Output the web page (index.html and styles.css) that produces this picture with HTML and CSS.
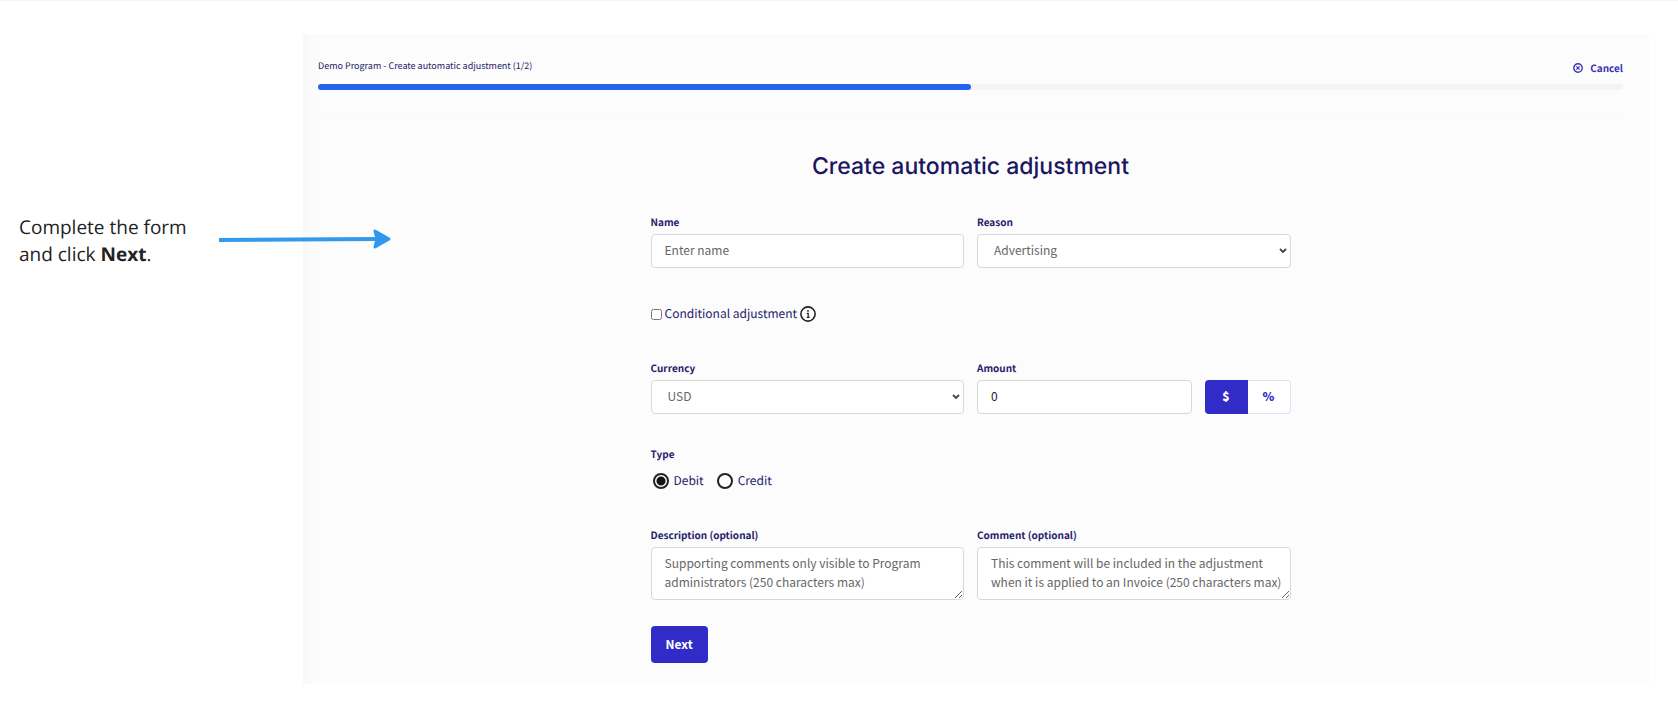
FILE: index.html
```html
<!DOCTYPE html>
<html lang="en">
<head>
  <meta charset="UTF-8">
  <meta name="viewport" content="width=device-width, initial-scale=1.0">
  <title>Create automatic adjustment</title>
  <link rel="stylesheet" href="styles.css">
</head>
<body>
  <div class="page">
    <aside class="guide">
      <p class="guide-text">Complete the form and click <strong>Next</strong>.</p>
      <svg class="guide-arrow" width="174" height="22" viewBox="0 0 174 22" aria-hidden="true">
        <path d="M0 12 L158 11" stroke="#3399ea" stroke-width="4" fill="none"/>
        <path d="M156 3 L170 11 L156 19 L158 11 Z" fill="#2f98ee" stroke="#2f98ee" stroke-width="3" stroke-linejoin="round"/>
      </svg>
    </aside>

    <main class="panel">
      <header class="panel-header">
        <div class="header-row">
          <span class="breadcrumb">Demo Program - Create automatic adjustment (1/2)</span>
          <a class="cancel" href="#">
            <svg width="10" height="10" viewBox="0 0 10 10" fill="none" stroke="currentColor" aria-hidden="true">
              <circle cx="5" cy="5" r="4.2" stroke-width="1.4"/>
              <path d="M3.3 3.3 L6.7 6.7 M6.7 3.3 L3.3 6.7" stroke-width="1.1"/>
            </svg>
            Cancel
          </a>
        </div>
        <div class="progress"><div class="progress-bar" style="width: 50%"></div></div>
      </header>

      <form class="form">
        <h1>Create automatic adjustment</h1>

        <div class="row">
          <div class="field">
            <label for="name">Name</label>
            <input class="control" type="text" id="name" placeholder="Enter name">
          </div>
          <div class="field">
            <label for="reason">Reason</label>
            <select class="control" id="reason">
              <option>Advertising</option>
            </select>
          </div>
        </div>

        <div class="check-row">
          <input class="checkbox" type="checkbox" id="conditional">
          <label for="conditional">Conditional adjustment</label>
          <svg class="info" width="16" height="16" viewBox="0 0 16 16" aria-hidden="true">
            <circle cx="8" cy="8" r="7.1" fill="none" stroke="#222" stroke-width="1.6"/>
            <circle cx="8" cy="4.9" r="0.9" fill="#222"/>
            <path d="M6.8 7.3 H8.2 V11.3 M6.7 11.3 H9.6" fill="none" stroke="#222" stroke-width="1.2"/>
          </svg>
        </div>

        <div class="row">
          <div class="field">
            <label for="currency">Currency</label>
            <select class="control" id="currency">
              <option>USD</option>
            </select>
          </div>
          <div class="amount">
            <div class="field">
              <label for="amount">Amount</label>
              <input class="control" type="text" id="amount" value="0">
            </div>
            <div class="toggle">
              <button type="button" class="toggle-button active">$</button>
              <button type="button" class="toggle-button">%</button>
            </div>
          </div>
        </div>

        <fieldset class="type">
          <legend>Type</legend>
          <div class="radios">
            <label><input type="radio" name="type" checked>Debit</label>
            <label><input type="radio" name="type">Credit</label>
          </div>
        </fieldset>

        <div class="row">
          <div class="field">
            <label for="description">Description (optional)</label>
            <textarea class="control" id="description" placeholder="Supporting comments only visible to Program administrators (250 characters max)"></textarea>
          </div>
          <div class="field">
            <label for="comment">Comment (optional)</label>
            <textarea class="control" id="comment" placeholder="This comment will be included in the adjustment when it is applied to an Invoice (250 characters max)"></textarea>
          </div>
        </div>

        <button type="submit" class="next">Next</button>
      </form>
    </main>
  </div>
</body>
</html>
```
FILE: styles.css
```css
* {
  box-sizing: border-box;
}

body {
  margin: 0;
  border-top: 1px solid #f3f3f3;
  background-color: #fff;
  color: #25206b;
  font-family: "Noto Sans CJK JP", "Noto Sans", sans-serif;
  font-size: 12px;
  line-height: 16px;
  text-rendering: geometricPrecision;
}

.page {
  display: grid;
  grid-template-columns: 303px 1fr;
  padding: 33px 29px 38px 0;
}

.guide {
  position: relative;
  padding: 180px 100px 0 19px;
}

.guide-text {
  margin: 0;
  color: #222;
  font-family: "Open Sans", sans-serif;
  font-size: 19px;
  line-height: 27px;
}

/* the arrow runs over the edge of the panel */
.guide-arrow {
  position: absolute;
  z-index: 1;
  top: 194px;
  left: 219px;
}

.panel {
  padding: 22px 26px 21px 15px;
  background: linear-gradient(to right, #f8f8f8, #fcfcfc 12px);
}

.panel-header {
  padding-bottom: 26px;
  border-bottom: 1px solid #f9f9f9;
}

.header-row {
  display: flex;
  justify-content: space-between;
  margin-bottom: 4px;
}

.breadcrumb {
  font-size: 9px;
  line-height: 20px;
}

.cancel {
  display: flex;
  align-items: center;
  gap: 7px;
  color: #3a32b5;
  font-size: 10px;
  font-weight: 700;
  line-height: 24px;
  text-decoration: none;
}

.progress {
  height: 6px;
  border-radius: 3px;
  background-color: #f4f4f4;
}

.progress-bar {
  height: 100%;
  border-radius: 3px;
  background-color: #2563eb;
}

.form {
  max-width: 640px;
  margin: 33px auto 0;
}

h1 {
  margin: 0 0 32px;
  color: #1a1661;
  font-family: Inter, sans-serif;
  font-size: 23px;
  font-weight: 500;
  line-height: 32px;
  text-align: center;
}

.row {
  display: grid;
  grid-template-columns: 1fr 1fr;
  gap: 13px;
}

.field {
  display: flex;
  flex: 1;
  flex-direction: column;
  gap: 5px;
  min-width: 0;
}

.field label,
legend {
  padding: 0;
  font-size: 10px;
  font-weight: 700;
  line-height: 15px;
}

.control {
  width: 100%;
  height: 34px;
  padding: 0 13px 3px;
  border: 1px solid #d8d8d8;
  border-radius: 4px;
  background-color: #fff;
  color: #222;
  font: inherit;
}

select.control {
  appearance: none;
  padding: 0 20px 2px 16px;
  background: #fff url("data:image/svg+xml,%3Csvg xmlns='http://www.w3.org/2000/svg' width='8' height='6'%3E%3Cpath d='M1 1 L4 4 L7 1' fill='none' stroke='%23444' stroke-width='1.8'/%3E%3C/svg%3E") no-repeat right 3px center;
  color: #666;
}

textarea.control {
  display: block;
  height: 53px;
  padding: 5px 6px 5px 13px;
  line-height: 19px;
  overflow: hidden;
  resize: vertical;
}

.control::placeholder {
  color: #666;
  opacity: 1;
}

.check-row {
  display: flex;
  align-items: center;
  gap: 3px;
  margin: 38px 0;
}

.checkbox {
  width: 11px;
  height: 11px;
  margin: 0;
}

.amount {
  display: flex;
  align-items: flex-end;
  gap: 13px;
}

.toggle {
  display: flex;
}

.toggle-button {
  width: 43px;
  height: 34px;
  padding: 0 0 2px;
  border: 1px solid #e2e1f7;
  border-left: 0;
  border-radius: 0 4px 4px 0;
  background-color: #fff;
  color: #312bc8;
  font: inherit;
  font-weight: 900;
}

.toggle-button.active {
  border: 0;
  border-radius: 4px 0 0 4px;
  background-color: #312bc8;
  color: #fff;
}

.type {
  margin: 32px 0 38px;
  padding: 0;
  border: 0;
}

.radios {
  display: flex;
  gap: 13px;
  padding: 12px 2px 0;
}

.radios label {
  display: flex;
  align-items: center;
  gap: 5px;
}

.radios input {
  appearance: none;
  width: 16px;
  height: 16px;
  margin: 0;
  border: 2px solid #222;
  border-radius: 50%;
  background-color: #fff;
}

.radios input:checked {
  background: radial-gradient(circle, #111 4px, #fff 5px);
}

.next {
  margin-top: 26px;
  padding: 9px 15px 11px;
  border: 0;
  border-radius: 4px;
  background-color: #312bc8;
  color: #fff;
  font: inherit;
  font-weight: 700;
  line-height: 17px;
}
```
